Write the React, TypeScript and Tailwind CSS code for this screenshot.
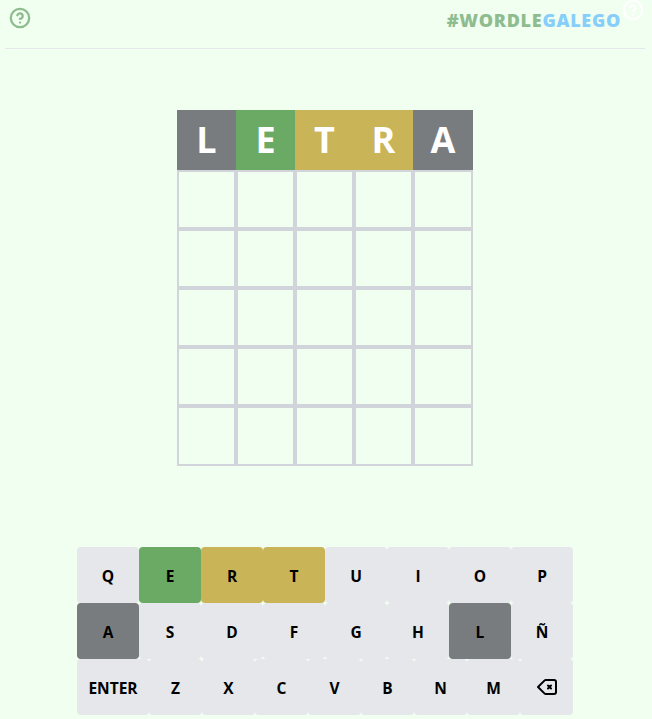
import React from 'react'
import { CircleHelp } from 'lucide-react'

type TileState = 'absent' | 'correct' | 'present'

const tileColors: Record<TileState, string> = {
  absent: 'bg-[#787c7e]',
  correct: 'bg-[#6aaa64]',
  present: 'bg-[#c9b458]',
}

const guess: { letter: string; state: TileState }[] = [
  { letter: 'L', state: 'absent' },
  { letter: 'E', state: 'correct' },
  { letter: 'T', state: 'present' },
  { letter: 'R', state: 'present' },
  { letter: 'A', state: 'absent' },
]

const keyState: Record<string, TileState> = {
  E: 'correct',
  R: 'present',
  T: 'present',
  A: 'absent',
  L: 'absent',
}

const BackspaceIcon = () => (
  <svg width="24" height="24" viewBox="0 0 24 24" fill="none" stroke="currentColor" strokeWidth="2" strokeLinecap="round" strokeLinejoin="round">
    <path d="M13 13.5l1.5-1.5m0 0l1.5-1.5m-1.5 1.5l-1.5-1.5m1.5 1.5l1.5 1.5M3 12l6.414 6.414a2 2 0 001.414.586H19a2 2 0 002-2V7a2 2 0 00-2-2h-8.172a2 2 0 00-1.414.586L3 12z" />
  </svg>
)

const Key = ({ label, wide }: { label: string; wide?: boolean }) => {
  const state = keyState[label]
  return (
    <div
      className={`flex h-14 items-center justify-center rounded-[4px] text-[15.5px] font-bold text-black ${
        wide ? 'w-[72px]' : 'flex-1'
      } ${state ? tileColors[state] : 'bg-[#e5e7eb]'}`}
    >
      {label === 'DEL' ? <BackspaceIcon /> : <span className="pt-[3px]">{label}</span>}
    </div>
  )
}

const App = () => {
  return (
    <div className="relative h-[719px] w-[652px] overflow-hidden bg-[#f0fff0] font-['Open_Sans',sans-serif]">
      {/* Header */}
      <div className="ml-[5px] flex h-[49px] w-[640px] items-start justify-between border-b border-[#e5e7eb] pt-[7px]">
        <CircleHelp size={22} strokeWidth={2.5} className="ml-[4px] text-[#8fbc8f]" />
        <div className="mt-[1px] mr-[24px] text-[18px] leading-[24px] font-extrabold tracking-[0.7px]">
          <span className="text-[#8fbc8f]">#WORDLE</span>
          <span className="text-[#87cefa]">GALEGO</span>
        </div>
      </div>
      <CircleHelp size={22} strokeWidth={2.5} className="absolute top-[-1px] left-[622px] text-white" />

      {/* Board */}
      <div className="mt-[61px] ml-[177px] grid h-[356px] w-[296px] grid-cols-[59px_59px_59px_59px_60px] grid-rows-[60px_59px_59px_59px_59px_60px]">
        {guess.map((tile, i) => (
          <div
            key={i}
            className={`flex items-center justify-center text-[36px] font-bold text-white ${tileColors[tile.state]}`}
          >
            {tile.letter}
          </div>
        ))}
        {Array.from({ length: 25 }).map((_, i) => (
          <div key={i} className="border-2 border-[#d1d5db]" />
        ))}
      </div>

      {/* Keyboard */}
      <div className="mt-[81px] ml-[77px] w-[496px]">
        <div className="flex">
          {'QERTUIOP'.split('').map((k) => (
            <Key key={k} label={k} />
          ))}
        </div>
        <div className="flex">
          {'ASDFGHLÑ'.split('').map((k) => (
            <Key key={k} label={k} />
          ))}
        </div>
        <div className="flex">
          <Key label="ENTER" wide />
          {'ZXCVBNM'.split('').map((k) => (
            <Key key={k} label={k} />
          ))}
          <Key label="DEL" />
        </div>
      </div>
    </div>
  )
}

export default App
